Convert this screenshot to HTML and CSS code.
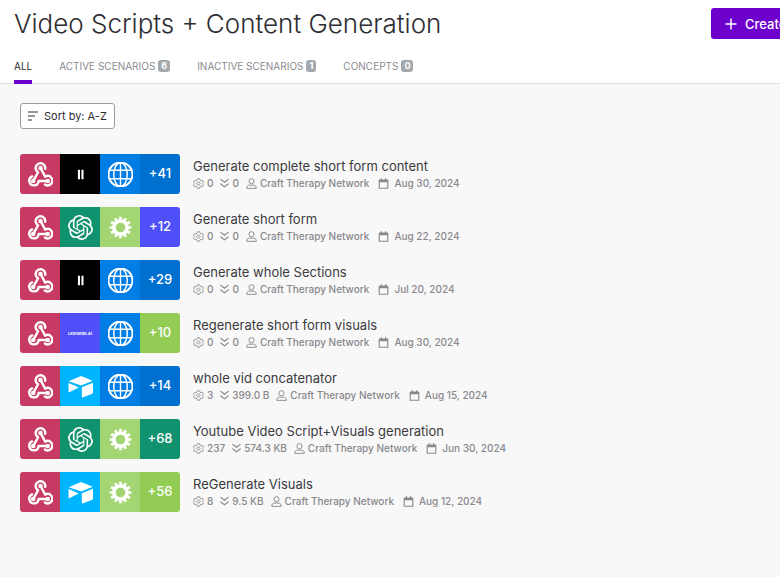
FILE: index.html
```html
<!DOCTYPE html>
<html lang="en">
<head>
<meta charset="utf-8">
<meta name="viewport" content="width=device-width, initial-scale=1">
<title>Video Scripts + Content Generation</title>
<link rel="stylesheet" href="styles.css">
</head>
<body>
<svg class="sprite" aria-hidden="true">
  <symbol id="webhook" viewBox="0 0 24 24">
    <g fill="none" stroke="currentColor" stroke-width="2.300" stroke-linecap="round" stroke-linejoin="round">
      <path d="M19 18.300h-8.800a4.500 4.500 0 1 1-6.200-4.500"/>
      <path d="M5 18.300 9.700 9.800a4.600 4.600 0 1 1 6.800-3.300"/>
      <path d="M12 5.800l4.500 8.300a4.500 4.500 0 1 1-.3 7.500"/>
    </g>
    <g fill="currentColor"><circle cx="12" cy="5.800" r="2.200"/><circle cx="5" cy="18.300" r="2.200"/><circle cx="19" cy="18.300" r="2.200"/></g>
  </symbol>
  <symbol id="pause" viewBox="0 0 24 24"><path fill="currentColor" d="M9.500 7.500h2v9h-2zM12.900 7.500h2v9h-2z"/></symbol>
  <symbol id="globe" viewBox="0 0 24 24">
    <g fill="none" stroke="currentColor" stroke-width="1.400">
      <circle cx="12" cy="12" r="11.500" stroke-width="1.900"/><ellipse cx="12" cy="12" rx="6.500" ry="11.300"/>
      <path d="M12 1v22M1.500 8h21M1.500 16h21"/>
    </g>
  </symbol>
  <symbol id="openai" viewBox="0 0 24 24"><path fill="currentColor" d="M22.2819 9.8211a5.9847 5.9847 0 0 0-.5157-4.9108 6.0462 6.0462 0 0 0-6.5098-2.9A6.0651 6.0651 0 0 0 4.9807 4.1818a5.9847 5.9847 0 0 0-3.9977 2.9 6.0462 6.0462 0 0 0 .7427 7.0966 5.98 5.98 0 0 0 .511 4.9107 6.051 6.051 0 0 0 6.5146 2.9001A5.9847 5.9847 0 0 0 13.2599 24a6.0557 6.0557 0 0 0 5.7718-4.2058 5.9894 5.9894 0 0 0 3.9977-2.9001 6.0557 6.0557 0 0 0-.7475-7.0729zm-9.022 12.6081a4.4755 4.4755 0 0 1-2.8764-1.0408l.1419-.0804 4.7783-2.7582a.7948.7948 0 0 0 .3927-.6813v-6.7369l2.02 1.1686a.071.071 0 0 1 .038.052v5.5826a4.504 4.504 0 0 1-4.4945 4.4944zm-9.6607-4.1254a4.4708 4.4708 0 0 1-.5346-3.0137l.142.0852 4.783 2.7582a.7712.7712 0 0 0 .7806 0l5.8428-3.3685v2.3324a.0804.0804 0 0 1-.0332.0615L9.74 19.9502a4.4992 4.4992 0 0 1-6.1408-1.6464zM2.3408 7.8956a4.485 4.485 0 0 1 2.3655-1.9728V11.6a.7664.7664 0 0 0 .3879.6765l5.8144 3.3543-2.0201 1.1685a.0757.0757 0 0 1-.071 0l-4.8303-2.7865A4.504 4.504 0 0 1 2.3408 7.872zm16.5963 3.8558L13.1038 8.364 15.1192 7.2a.0757.0757 0 0 1 .071 0l4.8303 2.7913a4.4944 4.4944 0 0 1-.6765 8.1042v-5.6772a.79.79 0 0 0-.407-.667zm2.0107-3.0231l-.142-.0852-4.7735-2.7818a.7759.7759 0 0 0-.7854 0L9.409 9.2297V6.8974a.0662.0662 0 0 1 .0284-.0615l4.8303-2.7866a4.4992 4.4992 0 0 1 6.6802 4.66zM8.3065 12.863l-2.02-1.1638a.0804.0804 0 0 1-.038-.0567V6.0742a4.4992 4.4992 0 0 1 7.3757-3.4537l-.142.0805L8.704 5.459a.7948.7948 0 0 0-.3927.6813zm1.0976-2.3654l2.602-1.4998 2.6069 1.4998v2.9994l-2.5974 1.4997-2.6067-1.4997Z"/></symbol>
  <symbol id="gear" viewBox="0 0 24 24">
    <g fill="none" stroke="currentColor"><circle cx="12" cy="12" r="6.400" stroke-width="3.600"/><circle cx="12" cy="12" r="9" stroke-width="2.800" pathLength="24" stroke-dasharray="1.100 .9" stroke-dashoffset=".55"/></g>
  </symbol>
  <symbol id="airtable" viewBox="0 0 24 24"><path fill="currentColor" d="M1.200 6.700 12 2.200q.6-.2 1.200 0l10 4q.5.300 0 .6l-10 4q-.6.200-1.200 0L1.200 7.300q-.5-.3 0-.6zM13.300 13.200q0-.6.600-.8l9.500-3.700q.6-.2.600.4v9q0 .6-.6.800l-9.500 3.700q-.6.200-.6-.4zM.5 9.300q0-.8.700-.5l8.600 3.800q.5.300 0 .6L1.200 17.500q-.7.300-.7-.4z"/></symbol>
  <symbol id="cog" viewBox="0 0 12 12"><g fill="none" stroke="currentColor"><path d="M4.800.8h2.400l.4 1.500 1.300.7 1.500-.4 1.100 2-1.100 1.100v.6l1.100 1.100-1.100 2-1.500-.4-1.300.7-.4 1.500H4.800l-.4-1.500-1.300-.7-1.500.4-1.100-2 1.100-1.100v-.6L.5 4.600l1.100-2 1.500.4 1.300-.7z" stroke-width=".9" stroke-linejoin="round"/><circle cx="6" cy="6" r="1.700" stroke-width=".9"/></g></symbol>
  <symbol id="down" viewBox="0 0 12 12"><path fill="none" stroke="currentColor" stroke-width="1.300" stroke-linecap="round" stroke-linejoin="round" d="M2 1.500l4 3.200 4-3.200M2 6.500l4 3.200 4-3.200"/></symbol>
  <symbol id="user" viewBox="0 0 12 12"><g fill="none" stroke="currentColor" stroke-width="1"><circle cx="6" cy="3.500" r="2.800"/><path stroke-linejoin="round" d="M.8 11.300c0-2.400 1.200-3.500 2.700-3.500h5c1.500 0 2.700 1.100 2.700 3.500z"/></g></symbol>
  <symbol id="calendar" viewBox="0 0 12 12"><path fill="none" stroke="currentColor" stroke-width="1.200" stroke-linejoin="round" d="M1.300 2.500h9.400v8.700H1.300z"/><path fill="currentColor" d="M1.300 2h9.400v2.500H1.300zM3 .3h1.400v2H3zM7.600.3H9v2H7.600z"/></symbol>
</svg>

<header class="page-header">
  <div class="title-row">
    <h1 class="title">Video Scripts + Content Generation</h1>
    <div class="title-action">
      <button class="create" type="button">
        <svg class="plus" viewBox="0 0 12 12" aria-hidden="true"><path d="M6 .5v11M.5 6h11"/></svg>
        Create a new scenario
      </button>
    </div>
  </div>
  <nav class="tabs">
    <a class="tab tab-active" href="#all">All</a>
    <a class="tab" href="#active">Active scenarios <span class="count">6</span></a>
    <a class="tab" href="#inactive">Inactive scenarios <span class="count">1</span></a>
    <a class="tab" href="#concepts">Concepts <span class="count">0</span></a>
  </nav>
</header>

<main class="content">
  <button class="sort" type="button">
    <svg class="sort-icon" viewBox="0 0 12 12" aria-hidden="true"><path d="M1 2h10M1 6h7M1 10h4"/></svg>
    Sort by: A-Z
  </button>
  <ul class="scenarios" id="scenarios"></ul>
</main>
<script src="scenarios.js"></script>
</body>
</html>
```

FILE: styles.css
```css
* {
  box-sizing: border-box;
}

body {
  margin: 0;
  background: #f8f8f8;
  color: #3b3b3f;
  font-family: Inter, "Liberation Sans", sans-serif;
  font-size: 13px;
  overflow-x: hidden;
}

button {
  font-family: inherit;
  cursor: pointer;
}

.sprite {
  display: none;
}

.page-header {
  background: #fff;
  border-bottom: 1px solid #e0e0e2;
}

.title-row {
  display: flex;
  align-items: flex-start;
  padding: 8px 0 0 14px;
}

.title {
  flex: 1;
  margin: 0;
  font-size: 26px;
  font-weight: 300;
  line-height: 32px;
  color: #2d2d32;
}

.title-action {
  flex: 0 0 69px;
  min-width: 0;
}

.create {
  display: flex;
  align-items: center;
  gap: 8px;
  height: 31px;
  padding: 0 14px;
  border: 0;
  border-radius: 3px;
  background: #6d00cc;
  color: #fff;
  font-size: 13px;
  font-weight: 500;
  white-space: nowrap;
}

.plus {
  width: 12px;
  height: 12px;
  fill: none;
  stroke: currentColor;
  stroke-width: 1.5;
}

.tabs {
  display: flex;
  gap: 27px;
  margin-bottom: -1px;
  padding: 16px 14px 0;
}

.tab {
  display: flex;
  align-items: center;
  gap: 3px;
  height: 28px;
  padding-bottom: 4px;
  border-bottom: 4px solid transparent;
  color: #8b8b90;
  font-size: 10px;
  text-decoration: none;
  text-transform: uppercase;
  white-space: nowrap;
}

.tab-active {
  border-bottom-color: #6d00cc;
  color: #2d2d32;
}

.count {
  padding: 0 3px;
  border-radius: 3px;
  background: #a4a9ad;
  color: #fff;
  font-size: 9px;
  font-weight: 700;
  line-height: 12px;
}

.content {
  padding: 19px 20px;
}

.sort {
  display: flex;
  align-items: center;
  gap: 5px;
  height: 26px;
  padding: 0 7px 0 6px;
  border: 1px solid #9a9a9e;
  border-radius: 3px;
  background: #fff;
  color: #2d2d32;
  font-size: 11px;
}

.sort-icon {
  width: 12px;
  height: 12px;
  fill: none;
  stroke: currentColor;
}

.scenarios {
  display: grid;
  gap: 13px;
  margin: 25px 0 0;
  padding: 0;
  list-style: none;
}

.scenario {
  display: flex;
  gap: 13px;
}

.apps {
  display: flex;
  flex: none;
  border-radius: 3px;
  overflow: hidden;
}

.app {
  display: grid;
  place-items: center;
  width: 40px;
  height: 40px;
  color: #fff;
  font-size: 13px;
  font-weight: 500;
}

.app-icon {
  width: 25px;
  height: 25px;
}

.webhook { background: #c73a63; }
.pause { background: #000; }
.globe { background: #007ee5; }
.openai { background: #10926f; }
.gear { background: #a3d672; }
.airtable { background: #00b5ff; }
.leonardo { background: #5050fa; font-size: 4px; font-weight: 700; }
.more { padding-bottom: 2px; }
.more-blue { background: #0070d0; }
.more-indigo { background: #5050fa; }
.more-lime { background: #93cc55; }
.more-green { background: #10926f; }

.name {
  margin: 2px 0 0;
  font-size: 13px;
  font-weight: 400;
  line-height: 20px;
}

.meta {
  display: flex;
  align-items: center;
  color: #88888c;
  font-size: 10px;
  font-weight: 500;
  line-height: 14px;
  white-space: nowrap;
}

.meta-item {
  display: flex;
  align-items: center;
  gap: 3px;
  margin-right: 6px;
}

.size {
  gap: 2px;
}

.owner {
  margin: 0 9px 0 1px;
}

.date {
  gap: 5px;
}

.meta-icon {
  width: 11px;
  height: 11px;
}
```

FILE: scenarios.js
```js
const scenarios = [
  ["Generate complete short form content", "pause", "globe", "+41", "blue", "0", "0", "Aug 30, 2024"],
  ["Generate short form", "openai", "gear", "+12", "indigo", "0", "0", "Aug 22, 2024"],
  ["Generate whole Sections", "pause", "globe", "+29", "blue", "0", "0", "Jul 20, 2024"],
  ["Regenerate short form visuals", "leonardo", "globe", "+10", "lime", "0", "0", "Aug 30, 2024"],
  ["whole vid concatenator", "airtable", "globe", "+14", "blue", "3", "399.0 B", "Aug 15, 2024"],
  ["Youtube Video Script+Visuals generation", "openai", "gear", "+68", "green", "237", "574.3 KB", "Jun 30, 2024"],
  ["ReGenerate Visuals", "airtable", "gear", "+56", "lime", "8", "9.5 KB", "Aug 12, 2024"]
];

const icon = (id, cls) => `<svg class="${cls}" aria-hidden="true"><use href="#${id}"/></svg>`;
const app = id => `<span class="app ${id}">${id === "leonardo" ? "Leonardo.Ai" : icon(id, "app-icon")}</span>`;
const meta = (id, text, cls) => `<span class="meta-item ${cls}">${icon(id, "meta-icon")}${text}</span>`;

document.getElementById("scenarios").innerHTML = scenarios.map(
  ([name, second, third, more, tone, runs, size, date]) => `
  <li class="scenario">
    <div class="apps">${app("webhook")}${app(second)}${app(third)}<span class="app more more-${tone}">${more}</span></div>
    <div>
      <h2 class="name">${name}</h2>
      <div class="meta">${meta("cog", runs, "runs")}${meta("down", size, "size")}${meta("user", "Craft Therapy Network", "owner")}${meta("calendar", date, "date")}</div>
    </div>
  </li>`).join("");
```
